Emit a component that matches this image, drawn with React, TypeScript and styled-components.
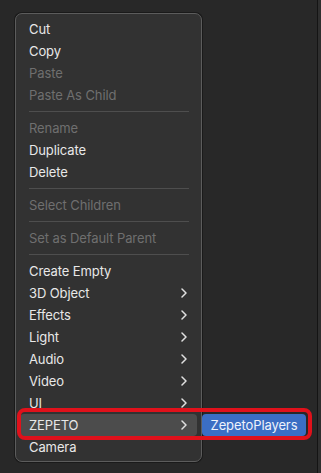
import React from 'react';
import styled, { createGlobalStyle } from 'styled-components';

const GlobalStyle = createGlobalStyle`
    html, body {
        margin: 0;
        padding: 0;
        background: #282828;
    }
    body {
        font-family: Inter, "Liberation Sans", sans-serif;
    }
`;

const StyledPage = styled.div`
    position: relative;
    width: 321px;
    height: 473px;
    display: flex;
    overflow: hidden;
    background: #282828;
`;
const StyledCanvas = styled.div`
    flex: 1;
    padding: 13px 0 0 15px;
`;
const StyledEdge = styled.div`
    width: 3px;
    border-left: 1px solid #141414;
    background: #2f2f2f;
`;
const StyledMenu = styled.div`
    position: relative;
    box-sizing: border-box;
    width: 187px;
    height: 449px;
    padding: 4px 4px 3px;
    background: #323232;
    border: 1px solid #5c5c5c;
    border-radius: 7px;
    box-shadow: 0 0 0 1px #1a1a1a;
`;
const StyledItem = styled.div<{ $disabled?: boolean; $active?: boolean }>`
    height: 22px;
    display: flex;
    align-items: center;
    justify-content: space-between;
    padding: 0 10px 0 9px;
    border-radius: 4px;
    font-size: 13px;
    letter-spacing: -0.1px;
    color: ${(p) => (p.$disabled ? '#6f6f6f' : '#e8e8e8')};
    background: ${(p) => (p.$active ? '#4c4c4c' : 'transparent')};
`;
const StyledSeparator = styled.div`
    height: 1px;
    margin: 5px 8px 5px 9px;
    background: #4e4e4e;
`;
const StyledSubmenu = styled.div`
    position: absolute;
    left: 186px;
    top: 400px;
    width: 104px;
    height: 22px;
    display: flex;
    align-items: center;
    justify-content: center;
    border-radius: 4px;
    background: #3b6ec4;
    color: #eef3fb;
    font-size: 13px;
    letter-spacing: -0.1px;
`;
const StyledHighlight = styled.div`
    position: absolute;
    left: 17px;
    top: 408px;
    width: 295px;
    height: 32px;
    box-sizing: border-box;
    border: 4px solid #e0111b;
    border-radius: 8px;
    pointer-events: none;
`;

const Chevron = () => (
    <svg width="6" height="10" viewBox="0 0 6 10">
        <path d="M1 1 L5 5 L1 9" fill="none" stroke="#e0e0e0" strokeWidth="1.5" strokeLinecap="round" strokeLinejoin="round" />
    </svg>
);

type Entry = { label?: string; disabled?: boolean; sub?: boolean; active?: boolean; sep?: boolean };

const entries: Entry[] = [
    { label: 'Cut' },
    { label: 'Copy' },
    { label: 'Paste', disabled: true },
    { label: 'Paste As Child', disabled: true },
    { sep: true },
    { label: 'Rename', disabled: true },
    { label: 'Duplicate' },
    { label: 'Delete' },
    { sep: true },
    { label: 'Select Children', disabled: true },
    { sep: true },
    { label: 'Set as Default Parent', disabled: true },
    { sep: true },
    { label: 'Create Empty' },
    { label: '3D Object', sub: true },
    { label: 'Effects', sub: true },
    { label: 'Light', sub: true },
    { label: 'Audio', sub: true },
    { label: 'Video', sub: true },
    { label: 'UI', sub: true },
    { label: 'ZEPETO', sub: true, active: true },
    { label: 'Camera' },
];

export default function App() {
    return (
        <StyledPage>
            <GlobalStyle />
            <StyledCanvas>
                <StyledMenu>
                    {entries.map((e, i) =>
                        e.sep ? (
                            <StyledSeparator key={i} />
                        ) : (
                            <StyledItem key={i} $disabled={e.disabled} $active={e.active}>
                                <span>{e.label}</span>
                                {e.sub && <Chevron />}
                            </StyledItem>
                        ),
                    )}
                    <StyledSubmenu>ZepetoPlayers</StyledSubmenu>
                </StyledMenu>
            </StyledCanvas>
            <StyledEdge />
            <StyledHighlight />
        </StyledPage>
    );
}
